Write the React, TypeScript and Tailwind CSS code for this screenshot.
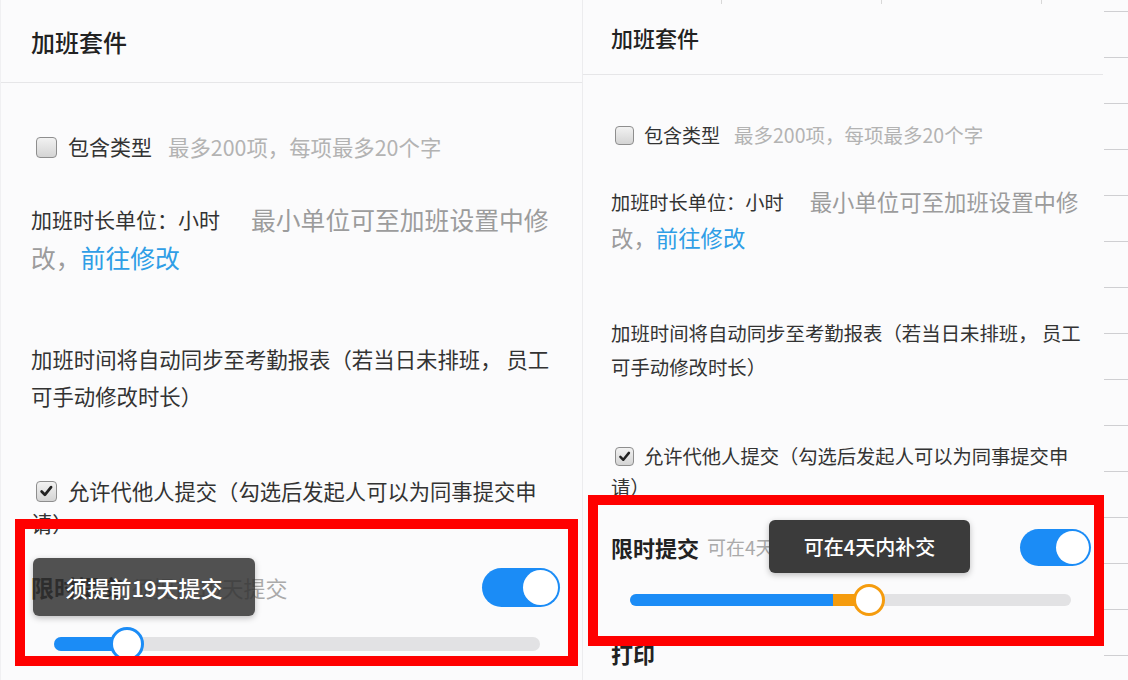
import React from "react";

const FONT = '"Noto Sans CJK SC", "Noto Sans", sans-serif';

function Box({ checked, size }: { checked?: boolean; size: number }) {
  return (
    <div
      className="shrink-0 rounded-[4px] border border-[#8e8e8e] bg-gradient-to-b from-[#f2f2f2] to-[#d4d4d4] flex items-center justify-center"
      style={{ width: size, height: size }}
    >
      {checked && (
        <svg width={size * 0.7} height={size * 0.7} viewBox="0 0 14 14">
          <path d="M2.5 7.2 L5.6 10.3 L11.5 3" fill="none" stroke="#222" strokeWidth="2.6" strokeLinecap="round" strokeLinejoin="round" />
        </svg>
      )}
    </div>
  );
}

function Toggle({ w, h }: { w: number; h: number }) {
  return (
    <div className="relative shrink-0 rounded-full bg-[#1b8cf6]" style={{ width: w, height: h }}>
      <div
        className="absolute top-[2px] right-[2px] rounded-full bg-white"
        style={{ width: h - 4, height: h - 4 }}
      />
    </div>
  );
}

export default function App() {
  return (
    <div className="w-[1128px] h-[680px] overflow-hidden flex bg-[#fbfbfc] text-[#333]" style={{ fontFamily: FONT }}>
      {/* LEFT PANEL */}
      <div className="relative w-[583px] shrink-0 border-r border-[#ececee] border-l border-l-[#f0f0f2] flex flex-col">
        <div className="h-[83px] shrink-0 border-b border-[#e6e6e8] flex items-center pl-[30px] pt-[1px]">
          <span className="text-[24px] font-medium text-[#222] leading-none">加班套件</span>
        </div>
        <div className="pl-[30px] flex flex-col">
          <div className="mt-[44px] h-[40px] flex items-center">
            <div className="ml-[5px]"><Box size={21} /></div>
            <span className="ml-[11px] text-[21px] text-[#333]">包含类型</span>
            <span className="ml-[16px] text-[21.4px] text-[#b3b3b3]">最多200项，每项最多20个字</span>
          </div>
          <div className="mt-[34px] flex flex-col">
            <div className="h-[38px] flex items-center whitespace-nowrap">
              <span className="text-[21px] text-[#333]">加班时长单位：小时</span>
              <span className="ml-[31px] text-[24.8px] text-[#9c9c9c]">最小单位可至加班设置中修</span>
            </div>
            <div className="h-[38px] flex items-center whitespace-nowrap">
              <span className="text-[24.8px] text-[#9c9c9c]">改，</span>
              <span className="text-[24.8px] text-[#2f9ee6]">前往修改</span>
            </div>
          </div>
          <div className="mt-[64px] flex flex-col text-[21.4px] text-[#333] whitespace-nowrap">
            <div className="h-[37px] flex items-center">加班时间将自动同步至考勤报表（若当日未排班， 员工</div>
            <div className="h-[37px] flex items-center">可手动修改时长）</div>
          </div>
          <div className="mt-[60px] flex flex-col text-[21.3px] text-[#333] whitespace-nowrap">
            <div className="h-[32px] flex items-center">
              <div className="ml-[5px]"><Box checked size={21} /></div>
              <span className="ml-[11px]">允许代他人提交（勾选后发起人可以为同事提交申</span>
            </div>
            <div className="h-[32px] flex items-center">请）</div>
          </div>
          <div className="mt-[28px] h-[40px] pr-[22px] flex items-center justify-between">
            <div className="flex items-center whitespace-nowrap">
              <span className="text-[23px] font-bold text-[#111]">限时提交</span>
              <span className="ml-[8px] text-[22px] text-[#aaa]">须提前19天提交</span>
            </div>
            <Toggle w={78} h={39} />
          </div>
          <div className="mt-[20px] ml-[23px] w-[486px] h-[34px] relative flex items-center">
            <div className="w-full h-[14px] rounded-full bg-[#e2e2e4] overflow-hidden flex">
              <div className="w-[73px] h-full bg-[#1b8cf6]" />
            </div>
            <div className="absolute left-[56px] top-0 w-[34px] h-[34px] rounded-full bg-white border-[3px] border-[#1b8cf6]" />
          </div>
        </div>
        {/* annotation */}
        <div className="absolute left-[14px] top-[519px] w-[563px] h-[147px] border-[10px] border-[#ff0000]" />
        <div className="absolute left-[32px] top-[558px] w-[222px] h-[58px] rounded-[6px] bg-[#333333]/85 shadow-[0_2px_6px_rgba(0,0,0,0.25)] flex items-center justify-center">
          <span className="text-[22px] font-medium text-white">须提前19天提交</span>
        </div>
      </div>

      {/* RIGHT PANEL */}
      <div className="relative w-[520px] shrink-0 flex flex-col">
        <div className="absolute top-0 left-[138px] w-px h-[4px] bg-[#d8d8d8]" />
        <div className="absolute top-0 left-[298px] w-px h-[4px] bg-[#d8d8d8]" />
        <div className="absolute top-0 left-[458px] w-px h-[4px] bg-[#d8d8d8]" />
        <div className="h-[75px] shrink-0 border-b border-[#e6e6e8] flex items-center pl-[28px]">
          <span className="text-[22px] font-medium text-[#222] leading-none">加班套件</span>
        </div>
        <div className="pl-[28px] flex flex-col">
          <div className="mt-[42px] h-[36px] flex items-center whitespace-nowrap">
            <div className="ml-[4px]"><Box size={19} /></div>
            <span className="ml-[10px] text-[19px] text-[#333]">包含类型</span>
            <span className="ml-[14px] text-[19.5px] text-[#b3b3b3]">最多200项，每项最多20个字</span>
          </div>
          <div className="mt-[31px] flex flex-col">
            <div className="h-[36px] flex items-center whitespace-nowrap">
              <span className="text-[19.2px] text-[#333]">加班时长单位：小时</span>
              <span className="ml-[26px] text-[22.4px] text-[#9c9c9c]">最小单位可至加班设置中修</span>
            </div>
            <div className="h-[36px] flex items-center whitespace-nowrap">
              <span className="text-[22.4px] text-[#9c9c9c]">改，</span>
              <span className="text-[22.4px] text-[#2f9ee6]">前往修改</span>
            </div>
          </div>
          <div className="mt-[60px] flex flex-col text-[19.4px] text-[#333] whitespace-nowrap">
            <div className="h-[34px] flex items-center">加班时间将自动同步至考勤报表（若当日未排班， 员工</div>
            <div className="h-[34px] flex items-center">可手动修改时长）</div>
          </div>
          <div className="mt-[57px] flex flex-col text-[19.3px] text-[#333] whitespace-nowrap">
            <div className="h-[31px] flex items-center">
              <div className="ml-[4px]"><Box checked size={19} /></div>
              <span className="ml-[10px]">允许代他人提交（勾选后发起人可以为同事提交申</span>
            </div>
            <div className="h-[31px] flex items-center">请）</div>
          </div>
          <div className="mt-[25px] h-[38px] pr-[12px] flex items-center justify-between">
            <div className="flex items-center whitespace-nowrap">
              <span className="text-[22px] font-bold text-[#222]">限时提交</span>
              <span className="ml-[8px] text-[19px] text-[#aaa]">可在4天内补交</span>
            </div>
            <Toggle w={71} h={37} />
          </div>
          <div className="mt-[18px] ml-[19px] w-[441px] h-[32px] relative flex items-center">
            <div className="w-full h-[12px] rounded-full bg-[#e2e2e4] overflow-hidden flex">
              <div className="w-[203px] h-full bg-[#1b8cf6]" />
              <div className="w-[36px] h-full bg-[#f59c0e]" />
            </div>
            <div className="absolute left-[223px] top-0 w-[32px] h-[32px] rounded-full bg-white border-[3px] border-[#f59c0e]" />
          </div>
          <div className="mt-[22px] h-[30px] flex items-center">
            <span className="text-[22px] font-bold text-[#222]">打印</span>
          </div>
        </div>
        {/* annotation */}
        <div className="absolute left-[5px] top-[495px] w-[516px] h-[151px] border-[10px] border-[#ff0000]" />
        <div className="absolute left-[186px] top-[520px] w-[201px] h-[53px] rounded-[6px] bg-[#3b3b3b] shadow-[0_2px_6px_rgba(0,0,0,0.25)] flex items-center justify-center">
          <span className="text-[20px] font-medium text-white">可在4天内补交</span>
        </div>
      </div>

      {/* RIGHT STRIP */}
      <div className="w-[25px] shrink-0 flex flex-col pt-[11px] gap-[45px] pl-[1px]">
        {Array.from({ length: 15 }).map((_, i) => (
          <div key={i} className="h-px w-full bg-[#cfcfd2]" />
        ))}
      </div>
    </div>
  );
}
